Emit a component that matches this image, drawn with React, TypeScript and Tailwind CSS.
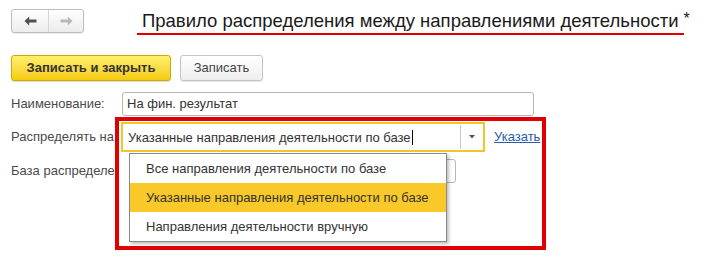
import { useState } from 'react'

const options = [
  'Все направления деятельности по базе',
  'Указанные направления деятельности по базе',
  'Направления деятельности вручную',
]

function ArrowLeft({ color }: { color: string }) {
  return (
    <svg width="13" height="10" viewBox="0 0 13 10">
      <path d="M0.5 5 L5.2 0.6 L5.2 3.5 L12.5 3.5 L12.5 6.5 L5.2 6.5 L5.2 9.4 Z" fill={color} />
    </svg>
  )
}

function ArrowRight({ color }: { color: string }) {
  return (
    <svg width="13" height="10" viewBox="0 0 13 10">
      <path d="M12.5 5 L7.8 0.6 L7.8 3.5 L0.5 3.5 L0.5 6.5 L7.8 6.5 L7.8 9.4 Z" fill={color} />
    </svg>
  )
}

export default function App() {
  const [selected] = useState(1)

  return (
    <div className="relative h-[260px] w-[710px] overflow-hidden bg-white font-['Liberation_Sans',Arial,sans-serif] text-[13px] text-[#4a4a4a]">
      {/* Header: navigation + title */}
      <div className="flex items-start pl-[11px] pt-[9px]">
        <div className="flex h-[24px] w-[73px] overflow-hidden rounded-[3px] border border-[#bdbdbd] bg-gradient-to-b from-white to-[#ececec] shadow-[0_1px_1px_rgba(0,0,0,0.08)]">
          <button type="button" className="flex w-[37px] items-center justify-center border-r border-[#d6d6d6]">
            <ArrowLeft color="#505050" />
          </button>
          <button type="button" className="flex flex-1 items-center justify-center">
            <ArrowRight color="#b8b8b8" />
          </button>
        </div>
        <div className="ml-[53px] mt-[1px] flex items-start">
          <h1 className="h-[25px] whitespace-nowrap border-b-2 border-[#e00000] pl-[5px] pr-[5px] text-[18.5px] leading-[22px] text-[#1a1a1a]">
            Правило распределения между направлениями деятельности
          </h1>
          <span className="text-[16px] leading-[18px] text-[#1a1a1a]">*</span>
        </div>
      </div>

      {/* Command bar */}
      <div className="ml-[11px] mt-[20px] flex gap-[9px]">
        <button
          type="button"
          className="h-[26px] w-[160px] rounded-[3px] border border-[#d0aa00] bg-gradient-to-b from-[#fff06a] to-[#f4cb00] text-[13px] font-bold text-[#333] shadow-[0_1px_1px_rgba(0,0,0,0.15)]"
        >
          Записать и закрыть
        </button>
        <button
          type="button"
          className="h-[26px] w-[83px] rounded-[3px] border border-[#c4c4c4] bg-gradient-to-b from-white to-[#eeeeee] text-[13px] text-[#444] shadow-[0_1px_1px_rgba(0,0,0,0.1)]"
        >
          Записать
        </button>
      </div>

      {/* Form */}
      <div className="ml-[11px] mt-[11px] flex flex-col">
        <div className="flex h-[24px] items-center">
          <div className="w-[111px] shrink-0">Наименование:</div>
          <div className="flex h-[24px] w-[412px] items-center rounded-[3px] border border-[#b8b8b8] px-[4px] text-[#333]">
            На фин. результат
          </div>
        </div>

        <div className="mt-[6px] flex h-[30px] items-center">
          <div className="w-[104px] shrink-0 overflow-hidden whitespace-nowrap">Распределять на:</div>
          <div className="ml-[6px] flex h-[30px] w-[364px] items-center border-2 border-[#f2c62b] bg-white text-[#333]">
            <div className="flex-1 whitespace-nowrap pl-[5px]">
              {options[selected]}
              <span className="ml-[1px] inline-block h-[15px] w-px translate-y-[3px] bg-black" />
            </div>
            <div className="flex h-[24px] w-[23px] items-center justify-center border-l border-[#c8c8c8]">
              <svg width="6" height="4" viewBox="0 0 6 4">
                <path d="M0 0 L6 0 L3 3.5 Z" fill="#555" />
              </svg>
            </div>
          </div>
          <a href="#" className="ml-[9px] text-[#2a5ca8] underline decoration-[#2a5ca8]">
            Указать
          </a>
        </div>

        <div className="mt-[7px] flex h-[24px] items-center">
          <div className="w-[104px] shrink-0 overflow-hidden whitespace-nowrap">База распределения:</div>
          <div className="ml-[200px] h-[24px] w-[141px] rounded-[3px] border border-[#b8b8b8]" />
        </div>
      </div>

      {/* Open dropdown list */}
      <div className="absolute left-[129px] top-[153px] w-[318px] border border-[#8a8a8a] bg-white shadow-[2px_2px_3px_rgba(0,0,0,0.25)]">
        {options.map((option, i) => (
          <div
            key={option}
            className={`flex h-[29px] items-center pl-[16px] text-[#333] ${
              i === selected ? 'bg-[#f8c928]' : ''
            }`}
          >
            {option}
          </div>
        ))}
      </div>

      {/* Red annotation frame */}
      <div className="pointer-events-none absolute left-[115px] top-[117px] h-[133px] w-[431px] border-4 border-[#e00000]" />
    </div>
  )
}
